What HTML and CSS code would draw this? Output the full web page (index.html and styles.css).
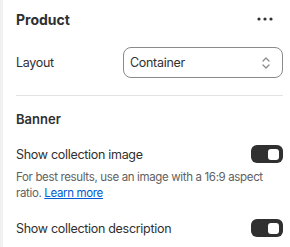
FILE: index.html
```html
<!DOCTYPE html>
<html lang="en">
<head>
    <meta charset="UTF-8">
    <title>Product settings</title>
    <link rel="stylesheet" href="styles.css">
</head>
<body>
    <div class="panel">
        <div class="panel-header">
            <h2>Product</h2>
            <button class="more-btn" aria-label="More">
                <svg width="16" height="4" viewBox="0 0 16 4"><circle cx="2" cy="2" r="1.6"/><circle cx="8" cy="2" r="1.6"/><circle cx="14" cy="2" r="1.6"/></svg>
            </button>
        </div>

        <div class="field-row">
            <label class="field-label">Layout</label>
            <div class="select">
                <span>Container</span>
                <svg width="10" height="14" viewBox="0 0 10 14"><path d="M2 5l3-3 3 3M2 9l3 3 3-3" fill="none" stroke="#8a8a8a" stroke-width="1.3" stroke-linecap="round" stroke-linejoin="round"/></svg>
            </div>
        </div>

        <hr class="divider">

        <h3 class="section-title">Banner</h3>

        <div class="toggle-row">
            <span>Show collection image</span>
            <span class="toggle on"><span class="knob"></span></span>
        </div>
        <p class="help">For best results, use an image with a 16:9 aspect ratio. <a href="#">Learn more</a></p>

        <div class="toggle-row">
            <span>Show collection description</span>
            <span class="toggle on"><span class="knob"></span></span>
        </div>
    </div>
</body>
</html>
```

FILE: styles.css
```css
body {
    margin: 0;
    background: #fff;
    font-family: Inter, "Noto Sans", sans-serif;
    color: #303030;
}
.panel {
    border-left: 3px solid #f1f1f1;
    padding: 6px 7px 0 13px;
    min-height: 247px;
    box-sizing: border-box;
}
.panel-header {
    display: flex;
    align-items: center;
    justify-content: space-between;
    height: 26px;
}
.panel-header h2 {
    margin: 0;
    font-size: 14px;
    font-weight: 650;
}
.more-btn {
    background: none;
    border: none;
    padding: 0;
    margin-right: 10px;
    display: flex;
    fill: #303030;
}
.field-row {
    display: flex;
    align-items: center;
    justify-content: space-between;
    margin-top: 15px;
}
.field-label {
    font-size: 12.5px;
    letter-spacing: -0.3px;
}
.select {
    width: 160px;
    height: 31px;
    box-sizing: border-box;
    border: 1px solid #8a8a8a;
    border-radius: 8px;
    display: flex;
    align-items: center;
    justify-content: space-between;
    padding: 0 11px 0 6px;
    font-size: 12.5px;
    letter-spacing: -0.3px;
}
.divider {
    border: none;
    border-top: 1px solid #e3e3e3;
    margin: 17px 0 0;
}
.section-title {
    margin: 15px 0 0;
    font-size: 13px;
    font-weight: 600;
}
.toggle-row {
    display: flex;
    align-items: center;
    justify-content: space-between;
    font-size: 12.5px;
    letter-spacing: -0.3px;
    margin-top: 18px;
}
.toggle {
    width: 32px;
    height: 18px;
    background: #303030;
    border-radius: 6px;
    display: flex;
    align-items: center;
    justify-content: flex-end;
    padding: 0 4px;
    box-sizing: border-box;
}
.knob {
    width: 11px;
    height: 11px;
    background: #fff;
    border-radius: 3px;
}
.help {
    margin: 6px 0 0;
    font-size: 11.5px;
    letter-spacing: -0.35px;
    line-height: 16px;
    color: #616161;
}
.help a {
    color: #005bd3;
}
.help + .toggle-row {
    margin-top: 18px;
}
```
